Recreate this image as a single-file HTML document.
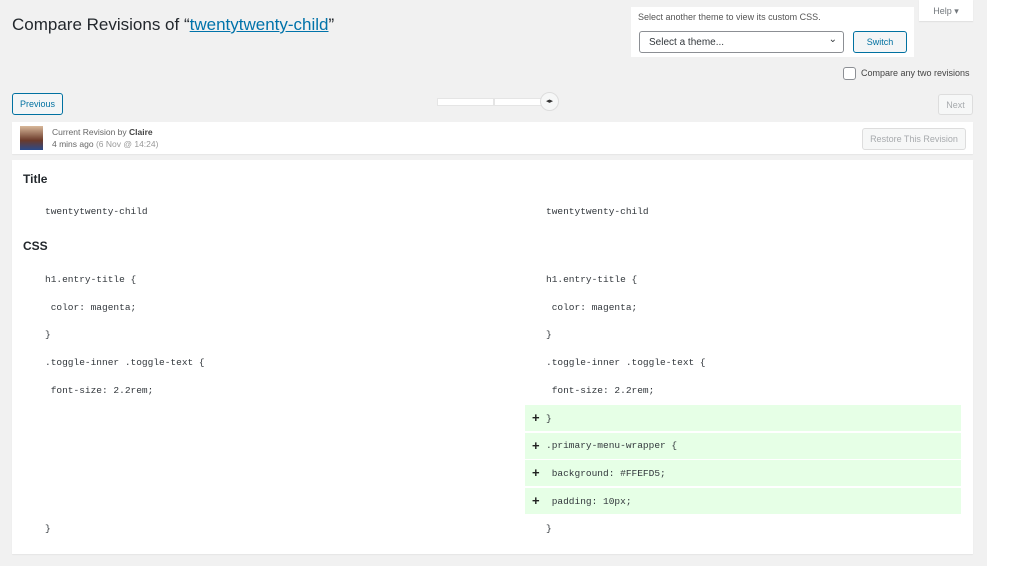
<!DOCTYPE html><html><head><style>
body{margin:0;width:1024px;height:566px;background:#fff;font-family:"Liberation Sans",sans-serif;position:relative;overflow:hidden}
.bg{position:absolute;left:0;top:0;width:987px;height:566px;background:#f1f1f1}
.a{position:absolute}
.code{font-family:"Liberation Mono",monospace;font-size:9.5px;color:#32373c}
.g{position:absolute;left:525px;width:436px;height:26px;background:#e6ffe6}
.p{position:absolute;left:532px;font-weight:bold;font-size:13px;color:#222}
</style></head><body><div class="bg"></div>
<div class="a" style="left:12px;top:15px;font-size:17px;color:#23282d">Compare Revisions of “<span style="color:#0073aa;text-decoration:underline">twentytwenty-child</span>”</div>
<div class="a" style="left:631px;top:7px;width:283px;height:50px;background:#fff"></div>
<div class="a" style="left:638px;top:12px;font-size:9px;color:#555">Select another theme to view its custom CSS.</div>
<div class="a" style="left:639px;top:31px;width:205px;height:22px;border:1px solid #8c8f94;border-radius:3px;background:#fff;box-sizing:border-box;font-size:10px;color:#32373c;padding:5px 9px">Select a theme...<span style="position:absolute;right:6px;top:2px;font-size:10px">⌄</span></div>
<div class="a" style="left:853px;top:31px;width:54px;height:22px;border:1px solid #0071a1;border-radius:3px;background:#f3f5f6;box-sizing:border-box;font-size:9px;color:#0071a1;text-align:center;line-height:20px">Switch</div>
<div class="a" style="left:919px;top:0;width:54px;height:21px;background:#fff;box-shadow:0 1px 1px rgba(0,0,0,.08);font-size:9px;color:#72777c;text-align:center;line-height:22px">Help ▾</div>
<div class="a" style="left:843px;top:67px;width:11px;height:11px;border:1px solid #8c8f94;border-radius:3px;background:#fff"></div>
<div class="a" style="left:861px;top:68px;font-size:9px;color:#444">Compare any two revisions</div>
<div class="a" style="left:12px;top:93px;width:51px;height:22px;border:1px solid #0071a1;border-radius:3px;background:#f3f5f6;box-sizing:border-box;font-size:9px;color:#0071a1;text-align:center;line-height:20px">Previous</div>
<div class="a" style="left:938px;top:94px;width:35px;height:21px;border:1px solid #ddd;border-radius:3px;background:#f6f7f7;box-sizing:border-box;font-size:9px;color:#a7aaad;text-align:center;line-height:20px">Next</div>
<div class="a" style="left:437px;top:98px;width:55px;height:6px;background:#fff;border:1px solid #e5e5e5"></div>
<div class="a" style="left:494px;top:98px;width:48px;height:6px;background:#fff;border:1px solid #e5e5e5"></div>
<div class="a" style="left:540px;top:92px;width:17px;height:17px;border-radius:50%;background:#f6f7f7;border:1px solid #ddd;font-size:7px;text-align:center;line-height:17px;color:#333">◂▸</div>
<div class="a" style="left:12px;top:122px;width:961px;height:32px;background:#fff;box-shadow:0 1px 1px rgba(0,0,0,.05)"></div>
<div class="a" style="left:20px;top:126px;width:23px;height:24px;background:linear-gradient(#d8b89a,#6b3a2a 60%,#2b4a8a)"></div>
<div class="a" style="left:52px;top:127px;font-size:8.5px;color:#666">Current Revision by <b style="color:#444">Claire</b></div>
<div class="a" style="left:52px;top:139px;font-size:8.5px;color:#666">4 mins ago <span style="color:#999">(6 Nov @ 14:24)</span></div>
<div class="a" style="left:862px;top:128px;width:104px;height:22px;border:1px solid #ddd;border-radius:3px;background:#f6f7f7;box-sizing:border-box;font-size:9px;color:#a7aaad;text-align:center;line-height:20px">Restore This Revision</div>
<div class="a" style="left:12px;top:160px;width:961px;height:394px;background:#fff;box-shadow:0 1px 1px rgba(0,0,0,.05)"></div>
<div class="a" style="left:23px;top:172px;font-size:12px;font-weight:bold;color:#23282d">Title</div>
<div class="a" style="left:23px;top:239px;font-size:12px;font-weight:bold;color:#23282d">CSS</div>
<div class="g" style="top:405px"></div><div class="g" style="top:433px"></div><div class="g" style="top:460px"></div><div class="g" style="top:488px"></div>
<div class="p" style="top:410px">+</div><div class="p" style="top:438px">+</div><div class="p" style="top:465px">+</div><div class="p" style="top:493px">+</div>
<div class="a code" style="left:45px;top:206px">twentytwenty-child</div>
<div class="a code" style="left:546px;top:206px">twentytwenty-child</div>
<div class="a code" style="left:45px;top:266px;line-height:27.7px;white-space:pre">h1.entry-title {
 color: magenta;
}
.toggle-inner .toggle-text {
 font-size: 2.2rem;
</div>
<div class="a code" style="left:45px;top:523px">}</div>
<div class="a code" style="left:546px;top:266px;line-height:27.7px;white-space:pre">h1.entry-title {
 color: magenta;
}
.toggle-inner .toggle-text {
 font-size: 2.2rem;
}
.primary-menu-wrapper {
 background: #FFEFD5;
 padding: 10px;
}</div>
</body></html>
